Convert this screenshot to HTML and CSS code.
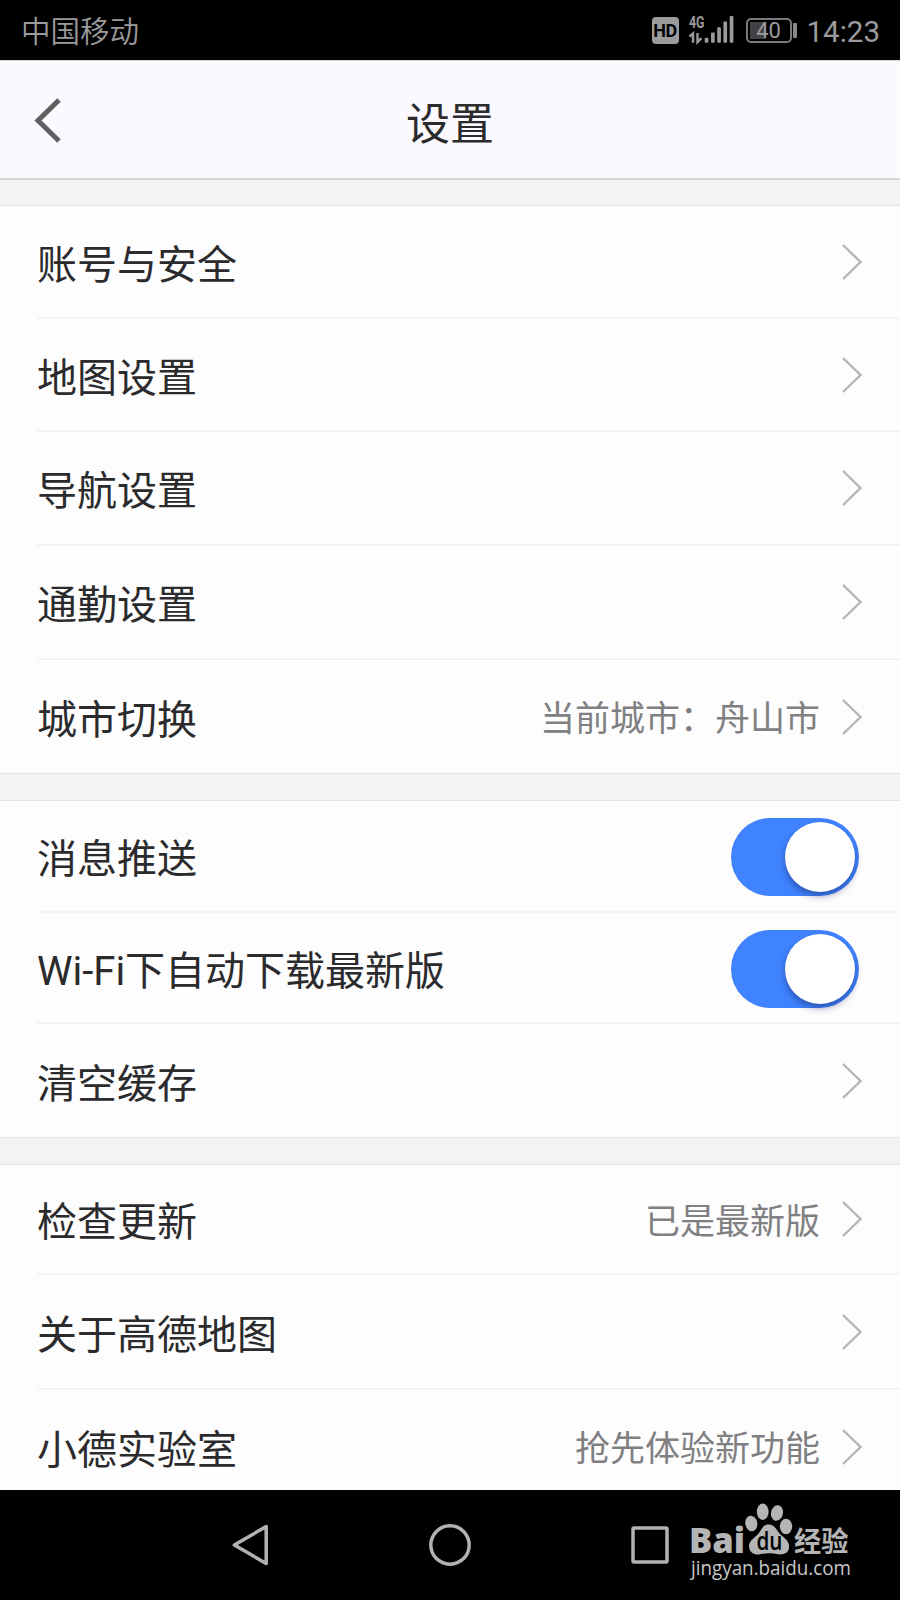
FILE: index.html
```
<!DOCTYPE html>
<html lang="zh-CN">
<head>
    <meta charset="UTF-8">
    <meta name="viewport" content="width=device-width, initial-scale=1.0">
    <title>设置</title>
    <link rel="stylesheet" href="styles.css">
</head>
<body>
    <div class="status-bar">
        <span class="carrier">中国移动</span>
        <div class="status-icons">
            <span class="hd">HD</span>
            <svg class="signal" width="46" height="36" viewBox="0 -3 46 36">
                <text x="0" y="12.5" class="network" textLength="15.5" lengthAdjust="spacingAndGlyphs">4G</text>
                <path d="M0.5 21.500L4 18.500v9.200M8.500 18v9.200l4-4" fill="none" stroke="#9b9b9d" stroke-width="2.4"/>
                <g fill="#9b9b9d">
                    <rect x="15.700" y="22.800" width="3.7" height="5" rx="1"/>
                    <rect x="22" y="17.500" width="3.7" height="10.300" rx="1"/>
                    <rect x="28.200" y="12.200" width="3.7" height="15.600" rx="1"/>
                    <rect x="34.400" y="6.500" width="3.7" height="21.300" rx="1"/>
                    <rect x="40.700" y="1" width="3.7" height="26.800" rx="1"/>
                </g>
            </svg>
            <span class="battery"><span class="level">40</span></span>
            <span class="time">14:23</span>
        </div>
    </div>

    <div class="header">
        <svg class="back" width="28" height="46" viewBox="0 0 28 46">
            <path d="M25 2L4 22.5L25 43" fill="none" stroke="#606062" stroke-width="5"/>
        </svg>
        <h1>设置</h1>
    </div>

    <div class="content">
        <ul class="group">
            <li class="row">
                <span class="label">账号与安全</span>
                <svg class="arrow" viewBox="0 0 22 38"><path d="M2 2L19.500 19L2 36"/></svg>
            </li>
            <li class="row">
                <span class="label">地图设置</span>
                <svg class="arrow" viewBox="0 0 22 38"><path d="M2 2L19.500 19L2 36"/></svg>
            </li>
            <li class="row tall">
                <span class="label">导航设置</span>
                <svg class="arrow" viewBox="0 0 22 38"><path d="M2 2L19.500 19L2 36"/></svg>
            </li>
            <li class="row tall">
                <span class="label">通勤设置</span>
                <svg class="arrow" viewBox="0 0 22 38"><path d="M2 2L19.500 19L2 36"/></svg>
            </li>
            <li class="row">
                <span class="label">城市切换</span>
                <span class="value">当前城市：舟山市</span>
                <svg class="arrow" viewBox="0 0 22 38"><path d="M2 2L19.500 19L2 36"/></svg>
            </li>
        </ul>

        <ul class="group">
            <li class="row switch-row">
                <span class="label">消息推送</span>
                <span class="switch"></span>
            </li>
            <li class="row switch-row">
                <span class="label">Wi-Fi下自动下载最新版</span>
                <span class="switch"></span>
            </li>
            <li class="row">
                <span class="label">清空缓存</span>
                <svg class="arrow" viewBox="0 0 22 38"><path d="M2 2L19.500 19L2 36"/></svg>
            </li>
        </ul>

        <ul class="group">
            <li class="row short">
                <span class="label">检查更新</span>
                <span class="value">已是最新版</span>
                <svg class="arrow" viewBox="0 0 22 38"><path d="M2 2L19.500 19L2 36"/></svg>
            </li>
            <li class="row taller">
                <span class="label">关于高德地图</span>
                <svg class="arrow" viewBox="0 0 22 38"><path d="M2 2L19.500 19L2 36"/></svg>
            </li>
            <li class="row">
                <span class="label">小德实验室</span>
                <span class="value">抢先体验新功能</span>
                <svg class="arrow" viewBox="0 0 22 38"><path d="M2 2L19.500 19L2 36"/></svg>
            </li>
        </ul>
    </div>

    <div class="nav-bar">
        <svg width="44" height="44" viewBox="0 0 44 44">
            <path d="M38.200 3.500V40.500L6.400 22Z"/>
        </svg>
        <svg width="44" height="44" viewBox="0 0 44 44">
            <circle cx="22" cy="22" r="19.200"/>
        </svg>
        <svg width="44" height="44" viewBox="0 0 44 44">
            <rect x="5" y="5" width="34" height="34" rx="1"/>
        </svg>

        <div class="watermark">
            <svg width="170" height="84" viewBox="0 0 170 84">
                <g class="brand">
                    <text x="-1" y="50.500" class="bai" textLength="56" lengthAdjust="spacingAndGlyphs">Bai</text>
                    <ellipse cx="61.300" cy="21.500" rx="6" ry="7.800" transform="rotate(-10 61.300 21.500)"/>
                    <ellipse cx="72.700" cy="9.800" rx="5.900" ry="8.200"/>
                    <ellipse cx="87" cy="11" rx="6" ry="7.800" transform="rotate(12 87 11)"/>
                    <ellipse cx="96" cy="24.500" rx="6.200" ry="7.800"/>
                    <path d="M78.500 22.500C85 22.500 87 29 91 33C96 37 99.500 40 99 45.500C98.500 51.500 93 53 88 52.300C81 51 76 51 70 52.300C63 53.500 59 49.500 59 44C59 38 65 36 69 31C72 27 73 22.500 78.500 22.500Z"/>
                    <text x="104" y="49.500" class="jingyan" textLength="54.500" lengthAdjust="spacingAndGlyphs">经验</text>
                    <text x="1" y="72.800" class="url" textLength="160" lengthAdjust="spacingAndGlyphs">jingyan.baidu.com</text>
                </g>
                <text x="66.500" y="47.500" class="du" textLength="26" lengthAdjust="spacingAndGlyphs">du</text>
            </svg>
        </div>
    </div>
</body>
</html>
```
FILE: styles.css
```
:root {
    --text-color: #2b2b2d;
    --value-color: #808082;
    --status-color: #9b9b9d;
    --nav-color: #b2b2b2;
    --blue: #4083ff;
    --page-bg: #f4f2f5;
    --group-border: #e4e3e6;
    --row-border: #f3f3f4;
}

* {
    margin: 0;
    padding: 0;
    box-sizing: border-box;
}

body {
    width: 900px;
    height: 1600px;
    overflow: hidden;
    display: flex;
    flex-direction: column;
    font-family: Roboto, "Noto Sans CJK SC", sans-serif;
    background-color: var(--page-bg);
    color: var(--text-color);
}

.status-bar {
    height: 60px;
    flex-shrink: 0;
    display: flex;
    justify-content: space-between;
    align-items: center;
    padding: 0 20px 0 21px;
    background-color: #000;
    color: var(--status-color);
}

.carrier {
    padding-top: 4px;
    font-size: 29.5px;
    line-height: 40px;
    font-weight: 350;
}

.status-icons {
    display: flex;
    align-items: center;
}

.hd {
    width: 27px;
    height: 27px;
    margin-right: 10px;
    border-radius: 4px;
    background-color: var(--status-color);
    color: #000;
    font-size: 18px;
    font-weight: 700;
    letter-spacing: -0.5px;
    line-height: 28px;
    text-align: center;
}

.signal {
    margin-right: 11px;
}

.network {
    font-size: 16px;
    font-weight: 700;
    fill: var(--status-color);
}

.battery {
    position: relative;
    width: 46px;
    height: 25px;
    margin-right: 15px;
    padding: 2px;
    border: 2px solid #77797a;
    border-radius: 5px;
}

.battery::after {
    content: "";
    position: absolute;
    left: 45px;
    top: 3px;
    width: 4px;
    height: 15px;
    border-radius: 1px;
    background-color: #88888a;
}

.level {
    display: block;
    height: 17px;
    background: linear-gradient(to right, #424244 42%, transparent 42%);
    font-size: 22px;
    line-height: 18px;
    text-align: center;
}

.time {
    padding-top: 3px;
    font-size: 29.5px;
    line-height: 36px;
}

.header {
    position: relative;
    height: 120px;
    flex-shrink: 0;
    display: flex;
    justify-content: center;
    align-items: center;
    padding-top: 10px;
    background-color: #fbf9fd;
    border-top: 1px solid #d4d3d6;
    border-bottom: 2px solid #d6d5d8;
}

.header h1 {
    font-size: 44px;
    font-weight: 400;
    line-height: 60px;
}

.back {
    position: absolute;
    left: 34px;
    top: 37px;
}

.content {
    height: 1310px;
    flex-shrink: 0;
    overflow: hidden;
    padding-top: 25px;
}

.group {
    list-style: none;
    margin-bottom: 26px;
    border-top: 1px solid var(--group-border);
    border-bottom: 1px solid var(--group-border);
    background-color: #fdfdfd;
}

.row {
    height: 113px;
    margin-left: 37px;
    padding-right: 37px;
    display: flex;
    align-items: center;
    border-bottom: 2px solid var(--row-border);
}

.row:last-child {
    border-bottom: none;
}

.row.tall {
    height: 114px;
}

.row.taller {
    height: 115px;
}

.row.short {
    height: 110px;
}

.switch-row {
    height: 111px;
    padding-right: 41px;
}

.switch-row:first-child {
    height: 112px;
}

.label {
    flex: 1;
    padding-top: 8px;
    font-size: 40px;
    line-height: 56px;
}

.value {
    margin-right: 21px;
    padding-top: 7px;
    font-size: 35px;
    line-height: 50px;
    color: var(--value-color);
}

.arrow {
    width: 22px;
    height: 38px;
    fill: none;
    stroke: #b5b5b7;
    stroke-width: 2.4;
}

.switch {
    width: 128px;
    height: 78px;
    margin-top: 2px;
    padding: 4px 4px 4px 54px;
    border-radius: 39px;
    background-color: var(--blue);
}

.switch::after {
    content: "";
    display: block;
    width: 70px;
    height: 70px;
    border-radius: 50%;
    background-color: #fff;
    box-shadow: 0 4px 7px rgba(20, 30, 90, 0.45);
}

.nav-bar {
    position: relative;
    height: 110px;
    flex-shrink: 0;
    display: flex;
    justify-content: center;
    gap: 156px;
    padding-top: 33px;
    background-color: #000;
}

.nav-bar > svg {
    fill: none;
    stroke: var(--nav-color);
    stroke-width: 3.5;
    stroke-linejoin: round;
}

.watermark {
    position: absolute;
    left: 690px;
    top: 12px;
}

.watermark svg {
    overflow: visible;
}

.brand {
    fill: #b5b5b5;
}

.bai {
    font-family: "Open Sans", sans-serif;
    font-size: 35.5px;
    font-weight: 800;
}

.du {
    font-family: "Open Sans", sans-serif;
    font-size: 25px;
    font-weight: 600;
    fill: #000;
}

.jingyan {
    font-family: "Noto Sans CJK SC", sans-serif;
    font-size: 28px;
    font-weight: 700;
}

.url {
    font-family: "Open Sans", sans-serif;
    font-size: 20px;
    fill: #c8c8c8;
}
```
